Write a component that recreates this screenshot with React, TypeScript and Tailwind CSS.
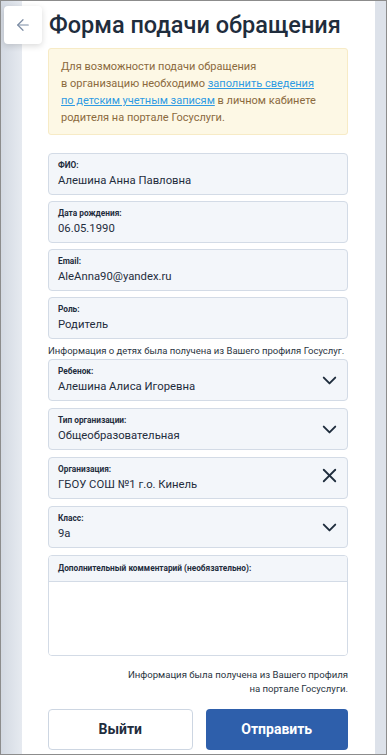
import { ChevronDown, X, ArrowLeft } from "lucide-react";

type FieldProps = {
  label: string;
  value: string;
  icon?: "down" | "x";
};

const Field = ({ label, value, icon }: FieldProps) => (
  <div className="flex h-[42px] rounded-[4px] border border-[#d3dbe6] bg-[#f3f6fa] pl-[9px] pr-[6px]">
    <div className="flex-1 min-w-0 pt-[6px]">
      <div className="text-[8.3px] leading-[10px] font-bold text-[#1f2d3d]">{label}</div>
      <div className="text-[11.3px] leading-[16px] text-[#1f2d3d] mt-[3px]">{value}</div>
    </div>
    {icon === "down" && (
      <ChevronDown size={23} strokeWidth={2} className="self-center text-[#1f2d3d]" />
    )}
    {icon === "x" && (
      <X size={23} strokeWidth={1.9} className="self-center text-[#1f2d3d] -mt-[6px]" />
    )}
  </div>
);

export default function App() {
  return (
    <div
      className="relative w-[387px] h-[755px] border border-[#8c8c8c] flex overflow-hidden"
      style={{ fontFamily: "Roboto, 'Liberation Sans', sans-serif" }}
    >
      {/* левая полоса */}
      <div className="w-[21px] bg-gradient-to-r from-[#d3d9e2] to-[#e6eaf0]" />
      {/* основная карточка */}
      <div className="w-[353px] bg-white pl-[26px] pr-[27px] pt-[8px]">
        <h1 className="text-[23.5px] leading-[32px] font-medium text-[#1f2d3d] pl-[1px] whitespace-nowrap">
          Форма подачи обращения
        </h1>
        <div className="mt-[7px] rounded-[3px] border border-[#f7ebc6] bg-[#fdf8e5] pl-[12px] pr-[8px] pt-[9px] pb-[8px] text-[11px] leading-[17px] text-[#8b6a3e]">
          Для возможности подачи обращения
          <br />в организацию необходимо{" "}
          <a className="text-[#2f9be3] underline">
            заполнить сведения
            <br />
            по детским учетным записям
          </a>{" "}
          в личном кабинете
          <br />
          родителя на портале Госуслуги.
        </div>

        <div className="mt-[18px] flex flex-col gap-[6px]">
          <Field label="ФИО:" value="Алешина Анна Павловна" />
          <Field label="Дата рождения:" value="06.05.1990" />
          <Field label="Email:" value="AleAnna90@yandex.ru" />
          <Field label="Роль:" value="Родитель" />
        </div>

        <div className="mt-[5px] text-[9.5px] leading-[14px] text-[#2a3542] whitespace-nowrap">
          Информация о детях была получена из Вашего профиля Госуслуг.
        </div>

        <div className="mt-[1px] flex flex-col gap-[7px]">
          <Field label="Ребенок:" value="Алешина Алиса Игоревна" icon="down" />
          <Field label="Тип организации:" value="Общеобразовательная" icon="down" />
          <Field label="Организация:" value="ГБОУ СОШ №1 г.о. Кинель" icon="x" />
          <Field label="Класс:" value="9а" icon="down" />

          <div className="rounded-[4px] border border-[#d3dbe6] overflow-hidden">
            <div className="h-[26px] bg-[#f3f6fa] border-b border-[#d3dbe6] pl-[9px] flex items-center text-[8.3px] font-bold text-[#1f2d3d]">
              Дополнительный комментарий (необязательно):
            </div>
            <div className="h-[73px] bg-white" />
          </div>
        </div>

        <div className="mt-[12px] text-right text-[9.6px] leading-[14px] text-[#2a3542]">
          Информация была получена из Вашего профиля
          <br />
          на портале Госуслуги.
        </div>

        <div className="mt-[13px] flex gap-[13px]">
          <button className="flex-1 h-[41px] rounded-[4px] border border-[#cdd6e2] bg-white text-[14px] font-bold text-[#1f2d3d]">
            Выйти
          </button>
          <button className="flex-1 h-[41px] rounded-[4px] bg-[#2e5fab] text-[14px] font-bold text-white">
            Отправить
          </button>
        </div>
      </div>
      {/* правая полоса */}
      <div className="flex-1 bg-[#dde2ea]" />

      {/* кнопка назад */}
      <button className="absolute left-[3px] top-[5px] w-[38px] h-[38px] rounded-[4px] bg-white shadow-[0_2px_6px_rgba(0,0,0,0.15)] flex items-center justify-center">
        <ArrowLeft size={18} strokeWidth={1.6} className="text-[#7b8ba3]" />
      </button>
    </div>
  );
}
